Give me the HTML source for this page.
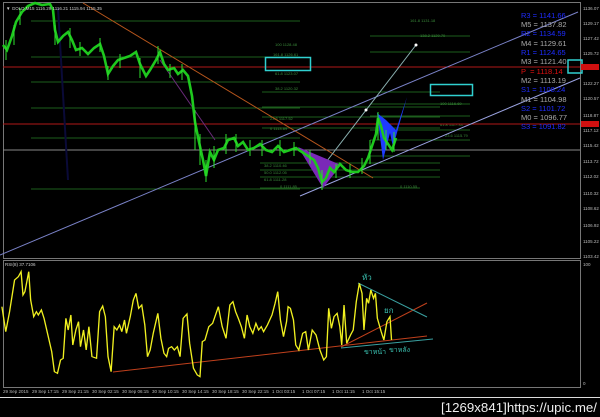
<!DOCTYPE html>
<html><head><meta charset="utf-8"><style>
html,body{margin:0;padding:0;background:#000;width:600px;height:417px;overflow:hidden}
svg{display:block}
text{font-family:"Liberation Sans","Noto Sans CJK SC",sans-serif}
</style></head><body>
<svg width="600" height="417" viewBox="0 0 600 417" xmlns="http://www.w3.org/2000/svg">
<rect width="600" height="417" fill="#000"/>
<rect x="3.5" y="2.5" width="577" height="256" fill="none" stroke="#777" stroke-width="1"/>
<rect x="3.5" y="260.5" width="577" height="127" fill="none" stroke="#777" stroke-width="1"/>
<line x1="0" y1="397.5" x2="600" y2="397.5" stroke="#ddd"/>
<g stroke="#1d5e1d" stroke-width="1">
<line x1="31" y1="21" x2="300" y2="21"/><line x1="31" y1="57" x2="300" y2="57"/>
<line x1="31" y1="82" x2="300" y2="82"/><line x1="31" y1="108" x2="300" y2="108"/>
<line x1="31" y1="138" x2="300" y2="138"/><line x1="31" y1="189" x2="300" y2="189"/>
<line x1="262" y1="92" x2="440" y2="92"/><line x1="262" y1="107" x2="440" y2="107"/>
<line x1="262" y1="117" x2="440" y2="117"/><line x1="262" y1="128" x2="440" y2="128"/>
<line x1="260" y1="163" x2="440" y2="163"/><line x1="260" y1="170" x2="440" y2="170"/>
<line x1="260" y1="177" x2="440" y2="177"/><line x1="260" y1="188" x2="420" y2="188"/>
<line x1="370" y1="36" x2="470" y2="36"/><line x1="370" y1="52" x2="470" y2="52"/>
<line x1="370" y1="104" x2="470" y2="104"/><line x1="370" y1="116" x2="470" y2="116"/>
<line x1="370" y1="130" x2="470" y2="130"/><line x1="370" y1="140" x2="470" y2="140"/>
<line x1="370" y1="156" x2="470" y2="156"/>
</g>
<g fill="#3a8a3a" font-size="4">
<text x="273" y="56">161.8 1126.61</text><text x="275" y="46">100 1128.48</text>
<text x="275" y="75">61.8 1123.07</text><text x="275" y="90">38.2 1120.32</text>
<text x="270" y="120">23.6 1117.52</text><text x="270" y="130">0 1113.89</text>
<text x="264" y="167">38.2 1110.46</text><text x="264" y="174">50.0 1112.05</text>
<text x="264" y="181">61.8 1111.28</text><text x="280" y="188">0 1111.85</text>
<text x="400" y="188">0 1110.55</text><text x="440" y="105">100 1116.69</text>
<text x="440" y="126">61.8 1117.33</text><text x="445" y="137">23.6 1115.79</text>
<text x="410" y="22">161.8 1131.18</text><text x="420" y="37">138.2 1129.70</text>
</g>
<line x1="3" y1="67" x2="580" y2="67" stroke="#b01818"/>
<line x1="3" y1="124" x2="580" y2="124" stroke="#b01818"/>
<line x1="3" y1="150" x2="580" y2="150" stroke="#888"/>
<line x1="83" y1="3" x2="373" y2="178" stroke="#b8561c"/>
<line x1="0" y1="255" x2="578" y2="12" stroke="#7a82c8"/>
<line x1="300" y1="196" x2="580" y2="78" stroke="#9aa2e0"/>
<line x1="320" y1="170" x2="416" y2="45" stroke="#8ab0b0"/>
<line x1="58" y1="8" x2="68" y2="180" stroke="#0a0a38" stroke-width="2"/>
<line x1="160" y1="60" x2="215" y2="140" stroke="#6a2a7a"/>
<circle cx="366" cy="110" r="1.5" fill="#fff"/><circle cx="416" cy="45" r="1.5" fill="#fff"/>
<polygon points="298,147 341,165 323,188" fill="#7a28b8"/>
<polygon points="377,113 383,160 390,133 393,147 407,97 396,130 386,120" fill="#1e3cff"/>
<polyline fill="none" stroke="#1ec81e" stroke-width="2.6" points="3,45 7,50 12,36 16,22 22,12 28,6 35,3 42,5 50,4 53,10 55,30 58,42 63,36 68,32 72,40 76,50 82,48 88,54 94,48 100,44 104,56 108,74 113,66 118,60 124,58 130,56 136,52 140,64 146,76 150,70 156,60 160,52 164,64 168,70 174,68 178,74 183,70 188,76 192,96 195,122 199,142 203,160 206,176 210,152 214,160 218,150 224,148 228,140 234,138 238,146 243,142 248,150 254,148 260,144 266,150 272,152 278,146 284,152 290,150 296,148 302,152 308,156 314,160 318,168 322,182 326,178 330,168 334,172 340,164 346,170 352,172 358,172 364,166 368,158 372,146 376,134 378,118 381,126 384,138 388,144 392,150 396,138"/>
<g stroke="#2ee02e" stroke-width="1">
<line x1="6" y1="40" x2="6" y2="60"/><line x1="14" y1="25" x2="14" y2="45"/><line x1="20" y1="8" x2="20" y2="25"/>
<line x1="55" y1="25" x2="55" y2="45"/><line x1="70" y1="28" x2="70" y2="48"/><line x1="80" y1="42" x2="80" y2="56"/>
<line x1="100" y1="38" x2="100" y2="52"/><line x1="108" y1="66" x2="108" y2="80"/><line x1="120" y1="54" x2="120" y2="68"/>
<line x1="140" y1="58" x2="140" y2="78"/><line x1="158" y1="46" x2="158" y2="64"/><line x1="170" y1="64" x2="170" y2="78"/>
<line x1="182" y1="64" x2="182" y2="80"/><line x1="195" y1="110" x2="195" y2="150"/><line x1="200" y1="134" x2="200" y2="165"/>
<line x1="206" y1="160" x2="206" y2="182"/><line x1="214" y1="146" x2="214" y2="168"/><line x1="226" y1="134" x2="226" y2="154"/>
<line x1="236" y1="134" x2="236" y2="152"/><line x1="250" y1="140" x2="250" y2="156"/><line x1="262" y1="140" x2="262" y2="156"/>
<line x1="280" y1="140" x2="280" y2="156"/><line x1="294" y1="142" x2="294" y2="156"/><line x1="310" y1="150" x2="310" y2="164"/>
<line x1="322" y1="170" x2="322" y2="190"/><line x1="336" y1="164" x2="336" y2="178"/><line x1="350" y1="164" x2="350" y2="178"/>
<line x1="362" y1="158" x2="362" y2="174"/><line x1="370" y1="140" x2="370" y2="164"/><line x1="378" y1="112" x2="378" y2="140"/>
<line x1="386" y1="130" x2="386" y2="150"/><line x1="394" y1="132" x2="394" y2="152"/>
</g>
<rect x="265.5" y="57.5" width="45" height="13" fill="none" stroke="#30d0d0" stroke-width="1.5"/>
<rect x="430.5" y="84.5" width="42" height="11" fill="none" stroke="#30d0d0" stroke-width="1.5"/>
<g font-size="7.5">
<text x="521" y="18" fill="#1e2cff">R3 = 1141.66</text>
<text x="521" y="27" fill="#aaa">M5 = 1137.82</text>
<text x="521" y="36" fill="#1e2cff">R2 = 1134.59</text>
<text x="521" y="46" fill="#aaa">M4 = 1129.61</text>
<text x="521" y="55" fill="#1e2cff">R1 = 1124.65</text>
<text x="521" y="64" fill="#aaa">M3 = 1121.40</text>
<text x="521" y="74" fill="#e01010">P&#160;&#160;= 1118.14</text>
<text x="521" y="83" fill="#aaa">M2 = 1113.19</text>
<text x="521" y="92" fill="#1e2cff">S1 = 1108.24</text>
<text x="521" y="102" fill="#aaa">M1 = 1104.98</text>
<text x="521" y="111" fill="#1e2cff">S2 = 1101.72</text>
<text x="521" y="120" fill="#aaa">M0 = 1096.77</text>
<text x="521" y="129" fill="#1e2cff">S3 = 1091.82</text>
</g>
<rect x="568" y="60" width="14" height="13" fill="none" stroke="#30d0d0" stroke-width="1.5"/>
<g fill="#bbb" font-size="4.5">
<text x="583" y="10">1136.07</text><text x="583" y="25">1129.17</text><text x="583" y="40">1127.42</text>
<text x="583" y="55">1125.72</text><text x="583" y="85">1122.27</text><text x="583" y="100">1120.57</text>
<text x="583" y="117">1118.87</text><text x="583" y="132">1117.12</text><text x="583" y="147">1115.42</text>
<text x="583" y="163">1113.72</text><text x="583" y="178">1112.02</text><text x="583" y="195">1110.32</text>
<text x="583" y="210">1108.62</text><text x="583" y="227">1106.92</text><text x="583" y="243">1105.22</text>
<text x="583" y="258">1103.42</text><text x="583" y="266">100</text><text x="583" y="385">0</text>
</g>
<rect x="581" y="64" width="18" height="6" fill="#d01010"/>
<rect x="581" y="121" width="18" height="6" fill="#d01010"/>
<text x="6" y="10" fill="#ccc" font-size="4.5">▼ GOLD,M15 1116.29 1116.21 1115.94 1115.35</text>
<text x="5" y="266" fill="#ccc" font-size="4.5">RSI(8) 37.7106</text>
<line x1="113" y1="372" x2="427" y2="336" stroke="#c0401c"/>
<line x1="341" y1="347" x2="427" y2="303" stroke="#c0401c"/>
<line x1="358" y1="283" x2="427" y2="317" stroke="#3aa0a0"/>
<line x1="341" y1="348" x2="433" y2="339" stroke="#3aa0a0"/>
<g transform="translate(0,250) scale(0.3831,0.3333)">
<polyline fill="none" stroke="#f0f020" stroke-width="3.5" points="5,170 15,245 25,185 38,90 48,80 55,65 60,135 65,125 75,65 80,150 88,200 95,185 100,195 108,180 115,205 125,255 135,305 142,365 150,370 158,330 165,325 172,205 178,240 185,195 190,285 198,240 205,215 210,290 218,240 225,300 232,230 240,320 252,325 260,185 268,168 275,200 282,320 290,365 298,230 305,240 312,225 318,245 325,210 330,250 340,200 348,150 355,130 362,175 370,165 378,225 385,320 392,300 400,250 405,225 412,190 420,265 428,310 435,320 440,295 448,290 455,300 463,290 470,320 478,205 488,192 495,280 505,355 515,375 522,380 528,275 535,270 545,230 555,220 570,170 580,230 590,265 600,165 608,155 615,185 622,205 630,230 638,265 645,195 652,230 660,250 668,220 675,240 682,230 688,245 698,225 710,195 718,160 725,125 732,210 740,260 748,215 752,170 758,175 766,210 772,285 780,300 790,250 798,245 805,300 815,240 825,255 835,300 845,330 852,320 858,175 865,235 872,200 880,190 887,230 892,285 898,165 905,280 915,255 922,240 930,155 938,100 945,130 950,240 957,145 962,160 968,120 975,145 980,130 985,205 995,245 1002,270 1010,215 1018,200 1022,270"/>
</g>
<g fill="#3ac0b0" font-size="8">
<text x="362" y="280">หัว</text><text x="384" y="313">ยก</text>
<text x="364" y="354" font-size="7">ขาหน้า</text><text x="389" y="352" font-size="7">ขาหลัง</text>
</g>
<g fill="#bbb" font-size="4.5">
<text x="3" y="393">29 Sep 2015</text><text x="32" y="393">29 Sep 17:15</text><text x="62" y="393">29 Sep 21:15</text>
<text x="92" y="393">30 Sep 02:15</text><text x="122" y="393">30 Sep 06:15</text><text x="152" y="393">30 Sep 10:15</text>
<text x="182" y="393">30 Sep 14:15</text><text x="212" y="393">30 Sep 18:15</text><text x="242" y="393">30 Sep 22:15</text>
<text x="272" y="393">1 Oct 03:15</text><text x="302" y="393">1 Oct 07:15</text><text x="332" y="393">1 Oct 11:15</text>
<text x="362" y="393">1 Oct 15:15</text>
</g>
<text x="597" y="412" fill="#eee" font-size="13" text-anchor="end" font-family="Liberation Sans Narrow, Liberation Sans, sans-serif" textLength="156" lengthAdjust="spacingAndGlyphs">[1269x841]https://upic.me/</text>
</svg>
</body></html>
